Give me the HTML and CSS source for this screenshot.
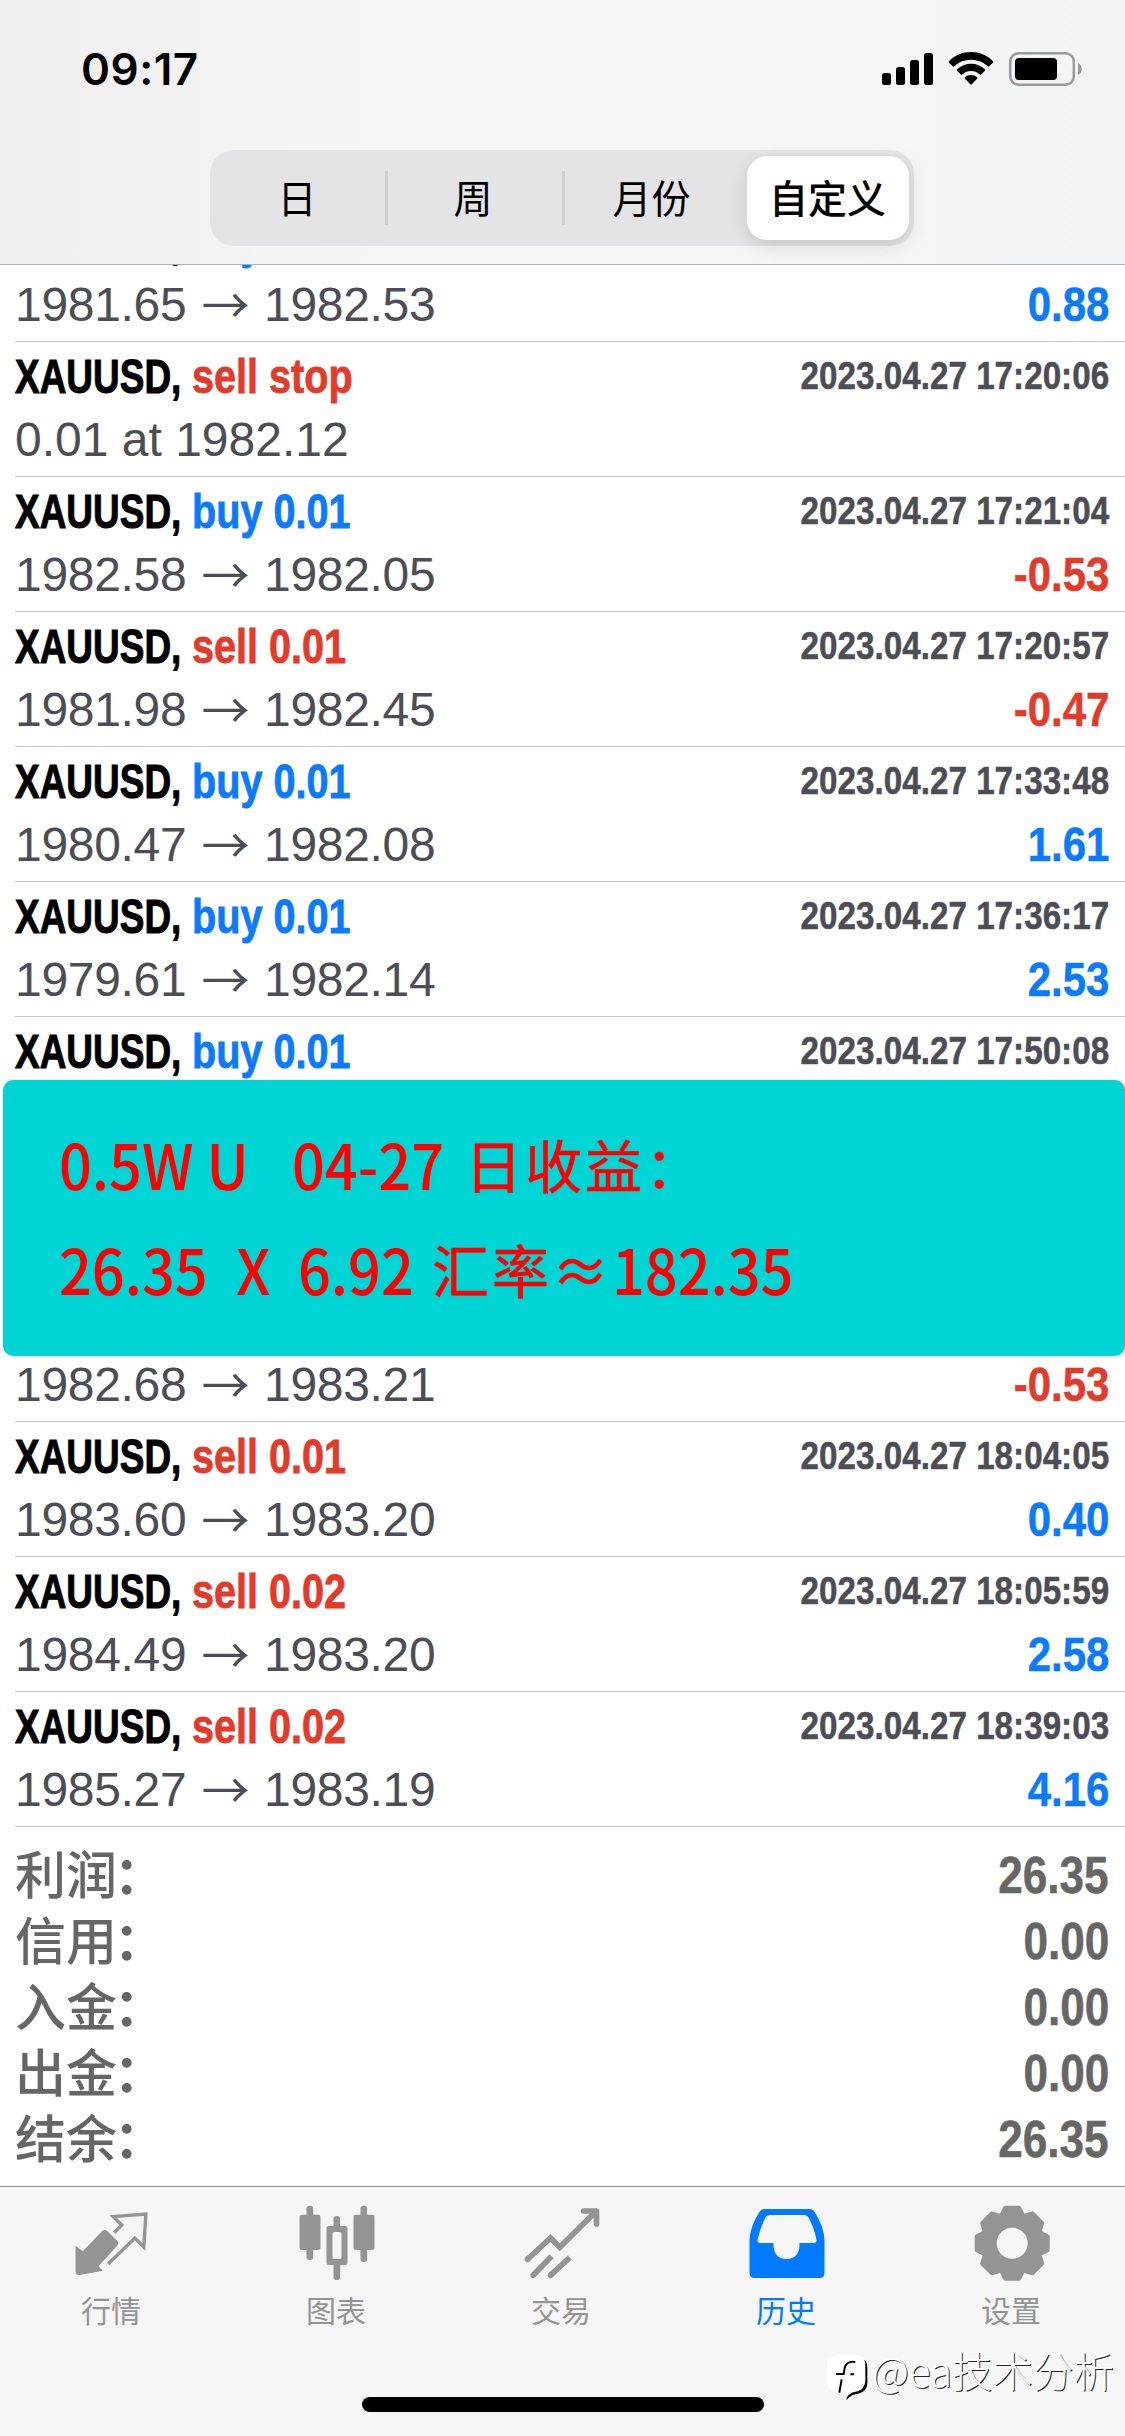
FILE: index.html
```html
<!DOCTYPE html>
<html lang="zh-CN">
<head>
<meta charset="utf-8">
<title>历史</title>
<link rel="stylesheet" href="styles.css">
</head>
<body>
<div class="screen">
  <header class="top">
    <div class="status">
      <span class="time">09:17</span>
      <svg class="status-icons" width="202" height="36" viewBox="881 51 202 36">
        <rect x="882" y="73" width="9" height="12" rx="2.5"/>
        <rect x="896" y="67" width="9" height="18" rx="2.5"/>
        <rect x="910" y="60" width="9" height="25" rx="2.5"/>
        <rect x="924" y="53" width="9" height="32" rx="2.5"/>
        <path d="M971 52c8.500 0 16.300 3.300 22 9.200q.7.800 0 1.600l-3.600 3.500q-.8.700-1.600 0a24.500 24.500 0 0 0-33.600 0q-.8.700-1.600 0l-3.600-3.500q-.7-.8 0-1.600c5.700-5.900 13.500-9.200 22-9.200z"/>
        <path d="M971 63.700c5.300 0 10.200 2 13.900 5.500q.8.800 0 1.600l-3.700 3.600q-.7.600-1.500 0a13 13 0 0 0-17.400 0q-.8.600-1.500 0l-3.700-3.600q-.8-.8 0-1.600c3.700-3.500 8.600-5.500 13.900-5.500z"/>
        <path d="M971 75c2.300 0 4.400.8 6 2.200q.8.800 0 1.600l-5.200 5.400q-.8.700-1.600 0l-5.200-5.400q-.8-.8 0-1.600c1.600-1.400 3.700-2.200 6-2.200z"/>
        <rect class="battery-case" x="1010.200" y="53.200" width="63.600" height="31.600" rx="8.500"/>
        <rect x="1015" y="58" width="42" height="22" rx="4"/>
        <path class="battery-nub" d="M1078 63c5 2 5 10 0 12z"/>
      </svg>
    </div>
    <nav class="segments">
      <span class="segment">日</span>
      <span class="segment divided">周</span>
      <span class="segment divided">月份</span>
      <span class="segment active">自定义</span>
    </nav>
  </header>

  <main class="history">
    <article class="deal">
      <div class="line head"><span class="symbol">XAUUSD,</span><span class="action buy">buy 0.01</span><time></time></div>
      <div class="line"><span class="price">1981.65</span><span class="arrow">→</span><span class="price">1982.53</span><span class="profit buy">0.88</span></div>
    </article>
    <article class="deal">
      <div class="line head"><span class="symbol">XAUUSD,</span><span class="action sell">sell stop</span><time>2023.04.27 17:20:06</time></div>
      <div class="line"><span class="price order">0.01 at 1982.12</span></div>
    </article>
    <article class="deal">
      <div class="line head"><span class="symbol">XAUUSD,</span><span class="action buy">buy 0.01</span><time>2023.04.27 17:21:04</time></div>
      <div class="line"><span class="price">1982.58</span><span class="arrow">→</span><span class="price">1982.05</span><span class="profit sell">-0.53</span></div>
    </article>
    <article class="deal">
      <div class="line head"><span class="symbol">XAUUSD,</span><span class="action sell">sell 0.01</span><time>2023.04.27 17:20:57</time></div>
      <div class="line"><span class="price">1981.98</span><span class="arrow">→</span><span class="price">1982.45</span><span class="profit sell">-0.47</span></div>
    </article>
    <article class="deal">
      <div class="line head"><span class="symbol">XAUUSD,</span><span class="action buy">buy 0.01</span><time>2023.04.27 17:33:48</time></div>
      <div class="line"><span class="price">1980.47</span><span class="arrow">→</span><span class="price">1982.08</span><span class="profit buy">1.61</span></div>
    </article>
    <article class="deal">
      <div class="line head"><span class="symbol">XAUUSD,</span><span class="action buy">buy 0.01</span><time>2023.04.27 17:36:17</time></div>
      <div class="line"><span class="price">1979.61</span><span class="arrow">→</span><span class="price">1982.14</span><span class="profit buy">2.53</span></div>
    </article>
    <article class="deal">
      <div class="line head"><span class="symbol">XAUUSD,</span><span class="action buy">buy 0.01</span><time>2023.04.27 17:50:08</time></div>
    </article>
    <article class="deal"></article>
    <article class="deal">
      <div class="line head"></div>
      <div class="line"><span class="price">1982.68</span><span class="arrow">→</span><span class="price">1983.21</span><span class="profit sell">-0.53</span></div>
    </article>
    <article class="deal">
      <div class="line head"><span class="symbol">XAUUSD,</span><span class="action sell">sell 0.01</span><time>2023.04.27 18:04:05</time></div>
      <div class="line"><span class="price">1983.60</span><span class="arrow">→</span><span class="price">1983.20</span><span class="profit buy">0.40</span></div>
    </article>
    <article class="deal">
      <div class="line head"><span class="symbol">XAUUSD,</span><span class="action sell">sell 0.02</span><time>2023.04.27 18:05:59</time></div>
      <div class="line"><span class="price">1984.49</span><span class="arrow">→</span><span class="price">1983.20</span><span class="profit buy">2.58</span></div>
    </article>
    <article class="deal">
      <div class="line head"><span class="symbol">XAUUSD,</span><span class="action sell">sell 0.02</span><time>2023.04.27 18:39:03</time></div>
      <div class="line"><span class="price">1985.27</span><span class="arrow">→</span><span class="price">1983.19</span><span class="profit buy">4.16</span></div>
    </article>

    <section class="totals">
      <div class="total"><span class="label">利润<i>：</i></span><span class="sum">26.35</span></div>
      <div class="total"><span class="label">信用<i>：</i></span><span class="sum">0.00</span></div>
      <div class="total"><span class="label">入金<i>：</i></span><span class="sum">0.00</span></div>
      <div class="total"><span class="label">出金<i>：</i></span><span class="sum">0.00</span></div>
      <div class="total"><span class="label">结余<i>：</i></span><span class="sum">26.35</span></div>
    </section>
  </main>

  <footer class="tabs">
    <div class="tab">
      <svg width="80" height="80" viewBox="217.5 66 240 240">
        <path fill="currentColor" d="M225 197l22 17 58-61q8-6 15 0l30 30q7 7 0 14l-56 62 13 13-68 13q-14 1-14-12z"/>
        <path fill="none" stroke="currentColor" stroke-width="10" d="M341 158l23-23-26-25 98-8-6 99-27-27-80 78"/>
      </svg>
      <span>行情</span>
    </div>
    <div class="tab">
      <svg width="80" height="80" viewBox="892.5 66 240 240" fill="currentColor">
        <rect x="918" y="77" width="20" height="163" rx="9"/><rect x="897" y="104" width="63" height="106" rx="7"/>
        <rect x="1080" y="77" width="20" height="169" rx="9"/><rect x="1059" y="104" width="63" height="106" rx="7"/>
        <path d="M999 140v-22q0-10 10-10t10 10v22zM999 253v37q0 10 10 10t10-10v-37z"/>
        <path fill-rule="evenodd" d="M985 138h49q7 0 7 7v103q0 7-7 7h-49q-7 0-7-7V145q0-7 7-7zM1001 156q-5 0-5 5v71q0 5 5 5h17q5 0 5-5v-71q0-5-5-5z"/>
      </svg>
      <span>图表</span>
    </div>
    <div class="tab">
      <svg width="80" height="80" viewBox="127.500 66 240 240" fill="none" stroke="currentColor" stroke-width="17">
        <path d="M139 240l71-66 28 28 104-104"/>
        <path stroke-linecap="round" stroke-linejoin="round" d="M309 93h39v39M141 238l4-4M158 286l4-4M210 286l4-4"/>
        <path d="M158 286l55-57M210 286l58-54"/>
      </svg>
      <span>交易</span>
    </div>
    <div class="tab current">
      <svg width="80" height="80" viewBox="802.5 66 240 240">
        <path fill="currentColor" fill-rule="evenodd" d="M851 87h138q9 0 13 8 29 46 30 86v98q0 15-15 15H822q-15 0-15-15v-98q1-40 30-86 5-8 14-8zM870 105q-11 0-16 9-17 35-23 65-1 10 8 10h40v8q2 38 39 40 37-2 39-40v-8h43q9 0 8-10-6-32-23-65-5-9-16-9z"/>
      </svg>
      <span>历史</span>
    </div>
    <div class="tab">
      <svg width="80" height="80" viewBox="517.5 66 240 240">
        <defs><path id="tooth" d="M-39-76L-32-86-21-107H21L32-86 39-76z"/></defs>
        <g transform="translate(635 190)" fill="currentColor" stroke="currentColor" stroke-width="11" stroke-linejoin="round">
          <circle r="66" fill="none" stroke-width="39"/>
          <use href="#tooth"/><use href="#tooth" transform="rotate(45)"/><use href="#tooth" transform="rotate(90)"/><use href="#tooth" transform="rotate(135)"/>
          <use href="#tooth" transform="rotate(180)"/><use href="#tooth" transform="rotate(225)"/><use href="#tooth" transform="rotate(270)"/><use href="#tooth" transform="rotate(315)"/>
        </g>
      </svg>
      <span>设置</span>
    </div>
  </footer>

  <aside class="note">
    <p><span class="n1">0.5W U</span><span class="n2">04-27</span><span class="cjk">日收益：</span></p>
    <p><span class="n3">26.35</span><span class="n4">X</span><span class="n5">6.92</span><span class="cjk n6">汇率≈</span><span class="n7">182.35</span></p>
  </aside>

  <div class="watermark">
    <svg width="42" height="48" viewBox="80 520 126 144">
      <path fill="#000" d="M116 530h58q27 4 27 32v44q0 29-36 35-17 4-26 18v-24l-30-3q-18-5-24-20z"/>
      <path fill="#fff" d="M110 522h56q29 2 29 32v48q-2 28-33 32-17 4-23 18l-2-15-24-2q-33-5-33-35v-46q0-30 30-32z"/>
      <path fill="none" stroke="#000" stroke-width="6" d="M165 544q-26-4-32 18l-3 18h-23M124 596l-7 40M150 581h11"/>
    </svg>
    <span>@ea技术分析</span>
  </div>
  <div class="home-bar"></div>
</div>
</body>
</html>
```
FILE: styles.css
```css
* { box-sizing: border-box; }
body { margin: 0; }
.screen {
  position: relative;
  display: flex;
  flex-direction: column;
  width: 1125px;
  height: 2436px;
  overflow: hidden;
  background: #fff;
  font-family: "Liberation Sans", "Noto Sans CJK SC", sans-serif;
}

/* header */
.top {
  position: relative;
  z-index: 1;
  flex: none;
  height: 265px;
  border-bottom: 1px solid #b1b1b4;
  background: linear-gradient(90deg, #efeff0, #f6f6f6 35%, #f6f6f6 75%, #f3f4f6);
}
.status {
  display: flex;
  justify-content: space-between;
  height: 150px;
  padding: 51px 42px 0 81px;
}
.time {
  font: 600 44px/36px Inter, sans-serif;
  letter-spacing: 0.5px;
}
.battery-case { fill: none; stroke: #9b9b9d; stroke-width: 2.5; }
.battery-nub { fill: #9b9b9d; }
.segments {
  display: grid;
  grid-template-columns: 175px 177px 180px 162px;
  width: 704px;
  height: 96px;
  margin-left: 210px;
  padding: 6px 0;
  border-radius: 24px;
  background: #e4e4e6;
}
.segment {
  height: 84px;
  padding-right: 1px;
  font: 400 39px/80px "Noto Sans CJK SC", sans-serif;
  text-align: center;
}
.divided {
  background: linear-gradient(#cfcfd1, #cfcfd1) left center / 3px 54px no-repeat;
}
.active {
  margin-left: 5px;
  margin-right: -5px;
  border-radius: 20px;
  background: #fff;
  font-weight: 500;
  box-shadow: 0 6px 20px rgba(0, 0, 0, .12);
}

/* deals */
.history { margin-top: -58px; flex: none; height: 2037px; }
.deal {
  height: 135px;
  margin-left: 15px;
  background: linear-gradient(#c8c8cb, #c8c8cb) bottom / 100% 1px no-repeat;
}
.line {
  display: flex;
  align-items: flex-start;
  height: 55px;
  padding-right: 16px;
  font-size: 48px;
  line-height: 55px;
  white-space: pre;
  color: #4d4d55;
}
.head { height: 70px; line-height: 70px; font-weight: 700; }
.symbol {
  width: 177px;
  color: #000;
  transform: scaleX(.77);
  transform-origin: left;
  -webkit-text-stroke: 1px currentColor;
}
.action {
  transform: scaleX(.825);
  transform-origin: left;
  -webkit-text-stroke: .8px currentColor;
}
.buy { color: #0a7aff; }
.sell { color: #e53a2a; }
time {
  margin-left: auto;
  font-size: 39px;
  line-height: 67px;
  transform: scaleX(.852);
  transform-origin: right;
  -webkit-text-stroke: .5px currentColor;
}
.price { width: 172px; letter-spacing: -.3px; }
.order { letter-spacing: 0; }
.arrow {
  width: 77px;
  text-align: center;
  font-family: "Noto Sans CJK SC", sans-serif;
  font-weight: 400;
  line-height: 51px;
}
.profit {
  margin-left: auto;
  font-weight: 700;
  transform: scaleX(.875);
  transform-origin: right;
  -webkit-text-stroke: .5px currentColor;
}

/* totals */
.totals { padding: 16px 16px 0 15px; }
.total {
  display: flex;
  justify-content: space-between;
  height: 66px;
  font-size: 51px;
  font-weight: 700;
  line-height: 66px;
  color: #666;
}
.label { font-family: "Noto Sans CJK SC", sans-serif; font-weight: 500; line-height: 59px; }
.label i { margin-left: -3px; font-style: normal; font-weight: 700; }
.sum { transform: scaleX(.865); transform-origin: right; -webkit-text-stroke: .5px currentColor; }

/* tab bar */
.tabs {
  display: grid;
  grid-template-columns: repeat(5, 1fr);
  position: absolute;
  inset: 2186px 0 0;
  padding-top: 15px;
  border-top: 1px solid #8c8c8e;
  background: #f6f6f6;
}
.tab {
  display: flex;
  flex-direction: column;
  align-items: center;
  color: #949494;
  font: 400 30px/44px "Noto Sans CJK SC", sans-serif;
}
.tab svg { margin-bottom: 5px; }
.tab span { padding-right: 3px; }
.current { color: #007aff; }

/* overlays */
.note {
  position: absolute;
  top: 1080px;
  left: 3px;
  width: 1122px;
  height: 276px;
  padding: 30px 0 0 56px;
  border-radius: 10px;
  background: #00d5d5;
  color: #f00;
}
.note p {
  display: flex;
  align-items: baseline;
  height: 105px;
  margin: 0;
  font: 500 63px/105px "Noto Sans CJK SC", sans-serif;
  white-space: pre;
}
.note span { transform: scaleX(.915); transform-origin: left; }
.note .cjk { font-size: 57px; font-weight: 400; letter-spacing: 3px; transform: translateY(-2px); -webkit-text-stroke: .6px currentColor; }
.n1 { width: 233px; }
.n2 { width: 173px; }
.n3 { width: 177px; }
.n4 { width: 62px; }
.n5 { width: 134px; }
.n6 { width: 180px; }
.watermark {
  position: absolute;
  top: 2348px;
  left: 827px;
  display: flex;
  align-items: flex-start;
  gap: 3px;
  color: #fff;
  font: 300 40.5px/44px "Noto Sans CJK SC", sans-serif;
  white-space: nowrap;
  text-shadow: 1px 1px 0 #222;
}
.watermark svg { margin-top: 6px; }
.home-bar {
  position: absolute;
  top: 2397px;
  left: 362px;
  width: 402px;
  height: 15px;
  border-radius: 8px;
  background: #000;
}
```
